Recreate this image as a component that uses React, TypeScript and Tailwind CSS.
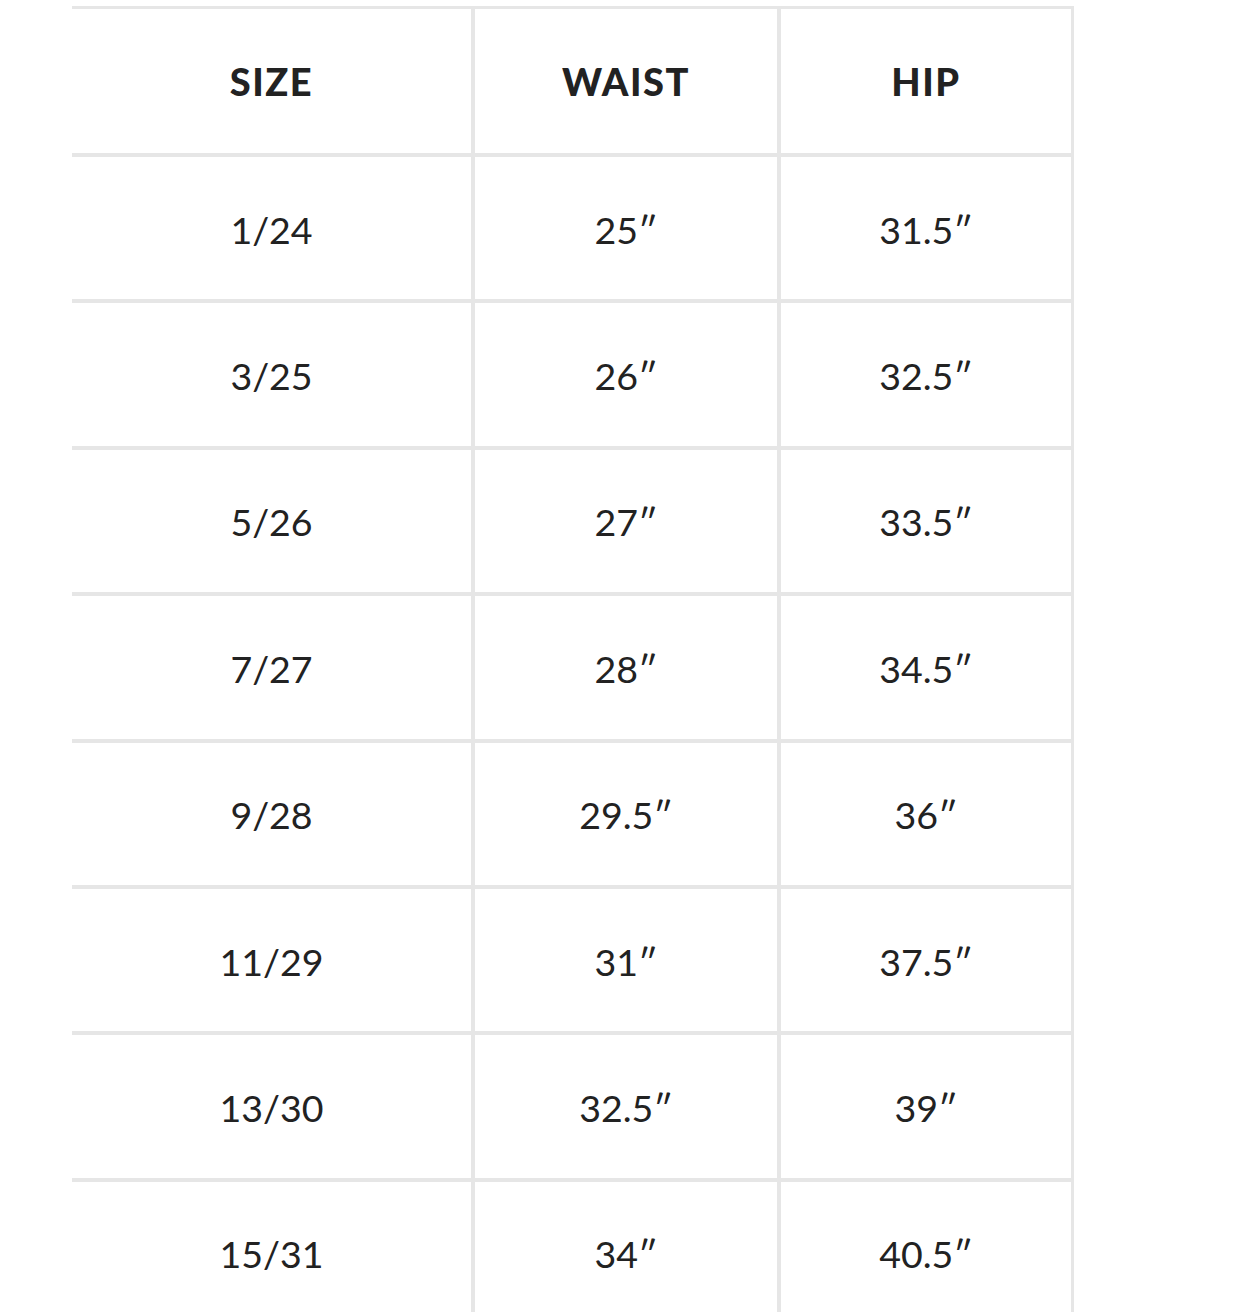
import React from "react";

const rows: [string, string, string][] = [
  ["1/24", "25″", "31.5″"],
  ["3/25", "26″", "32.5″"],
  ["5/26", "27″", "33.5″"],
  ["7/27", "28″", "34.5″"],
  ["9/28", "29.5″", "36″"],
  ["11/29", "31″", "37.5″"],
  ["13/30", "32.5″", "39″"],
  ["15/31", "34″", "40.5″"],
];

export default function App() {
  return (
    <div
      className="w-[1260px] h-[1312px] overflow-hidden bg-white pt-[6px] pl-[72px]"
      style={{ fontFamily: "Lato, 'Noto Sans', sans-serif" }}
    >
      <div className="w-[1002px] border-t-[3px] border-[#e6e6e6] text-[#222222]">
        <div className="grid grid-cols-[403px_306px_293px] h-[148px]">
          {["SIZE", "WAIST", "HIP"].map((h, i) => (
            <div
              key={h}
              className={`flex items-center justify-center border-b-4 border-[#e6e6e6] font-black text-[38px] tracking-[0.04em] ${
                i === 2 ? "border-r-[3px]" : "border-r-4"
              }`}
            >
              {h}
            </div>
          ))}
        </div>
        {rows.map((r) => (
          <div key={r[0]} className="grid grid-cols-[403px_306px_293px] h-[146.4px]">
            {r.map((c, i) => (
              <div
                key={i}
                className={`flex items-center justify-center border-b-4 border-[#e6e6e6] text-[37.5px] font-normal pt-[3px] ${
                  i === 2 ? "border-r-[3px]" : "border-r-4"
                }`}
              >
                {c}
              </div>
            ))}
          </div>
        ))}
      </div>
    </div>
  );
}
